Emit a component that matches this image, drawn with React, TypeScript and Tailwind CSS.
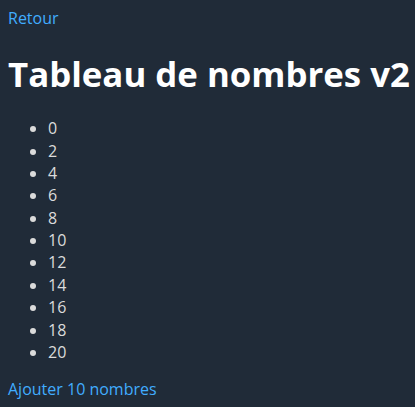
const numbers = [0, 2, 4, 6, 8, 10, 12, 14, 16, 18, 20];

export default function App() {
  return (
    <div className="min-h-screen bg-[#202b38] px-2 pt-[7px] text-[16px] leading-[1.4] text-[#dbdbdb] [font-family:'Open_Sans',sans-serif]">
      <a href="#" className="text-[#41adff]">
        Retour
      </a>
      <h1 className="mt-[24px] mb-[22px] whitespace-nowrap text-[34.8px] font-bold leading-[1.2] text-white">
        Tableau de nombres v2
      </h1>
      <ul className="list-disc pl-10">
        {numbers.map((n) => (
          <li key={n}>{n}</li>
        ))}
      </ul>
      <button className="mt-[15px] cursor-pointer text-[#41adff]">Ajouter 10 nombres</button>
    </div>
  );
}
